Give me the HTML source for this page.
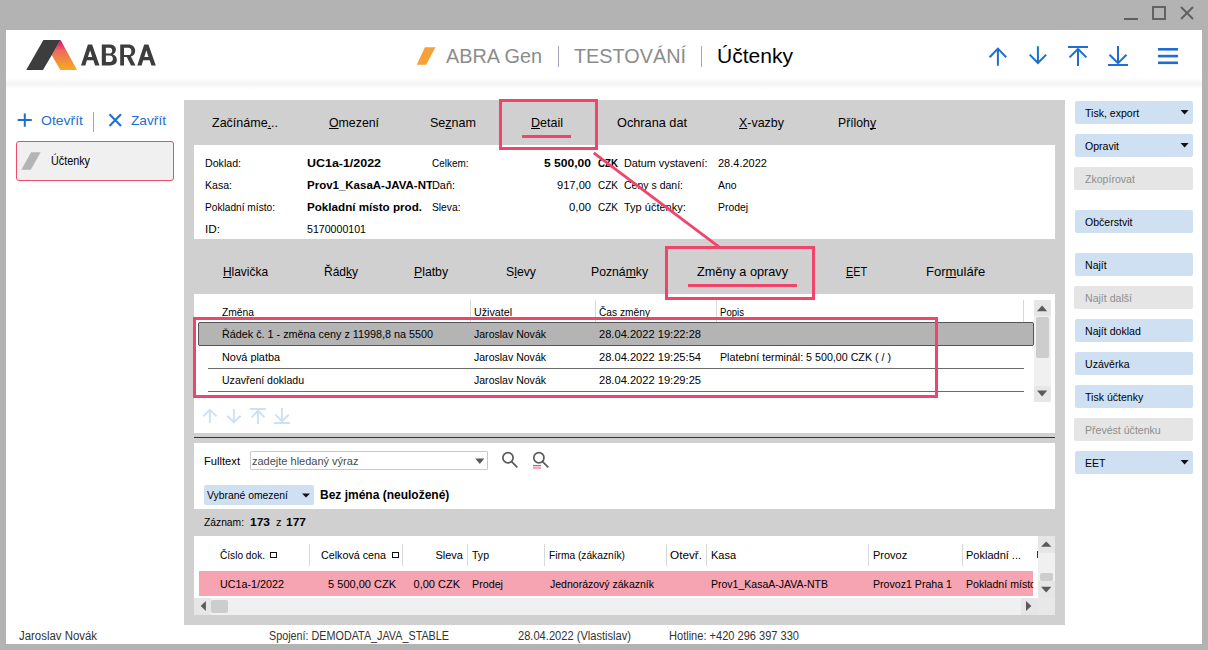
<!DOCTYPE html>
<html><head><meta charset="utf-8"><title>ABRA Gen - Účtenky</title>
<style>
html,body{margin:0;padding:0}
body{width:1208px;height:650px;overflow:hidden;position:relative;background:#b3b3b3;font-family:"Liberation Sans",sans-serif}
.a{position:absolute;display:block}
.t{position:absolute;white-space:pre;display:block}
u{text-decoration:underline;text-decoration-thickness:1px;text-underline-offset:1px;text-decoration-skip-ink:none}
</style></head><body>
<div class="a" style="left:6px;top:30px;width:1196px;height:614px;background:#fff"></div>
<div class="a" style="left:6px;top:79px;width:1196px;height:10px;background:linear-gradient(#fdfdfd,#f5f5f5 45%,#f7f7f7 60%,#fefefe)"></div>
<svg class="a" style="left:1115px;top:0" width="90" height="28" viewBox="1115 0 90 28">
<rect x="1124" y="18" width="14" height="2" fill="#5f5f5f"/>
<rect x="1153" y="7" width="12" height="12" fill="none" stroke="#5f5f5f" stroke-width="1.9"/>
<path d="M1181 7 L1193 19 M1193 7 L1181 19" stroke="#5f5f5f" stroke-width="1.9"/>
</svg>
<svg class="a" style="left:20px;top:35px" width="60" height="40" viewBox="20 35 60 40">
<defs><linearGradient id="lg" x1="0" y1="0" x2="0" y2="1"><stop offset="0" stop-color="#e5007d"/><stop offset="0.35" stop-color="#ec6a5e"/><stop offset="1" stop-color="#f6ac1e"/></linearGradient></defs>
<polygon points="60.6,40 77,70 60.3,70 51.7,55" fill="url(#lg)"/>
<polygon points="43.4,40 60.6,40 43,70 26.2,70" fill="#3d3d3d"/>
</svg>
<svg class="a" style="left:78px;top:40px" width="82" height="30" viewBox="78 40 82 30">
<g fill="#3d3d3d" fill-rule="evenodd">
<path d="M81 65.4 L87.9 44.4 L92.1 44.4 L99.5 65.4 L95.1 65.4 L93.4 60.3 L86.9 60.3 L85.3 65.4 Z M88 56.9 L92.2 56.9 L90.1 50.2 Z"/>
<path transform="translate(56.3 0)" d="M81 65.4 L87.9 44.4 L92.1 44.4 L99.5 65.4 L95.1 65.4 L93.4 60.3 L86.9 60.3 L85.3 65.4 Z M88 56.9 L92.2 56.9 L90.1 50.2 Z"/>
<path d="M101.8 44.4 H109.5 C113.5 44.4 115.9 46.5 115.9 49.6 C115.9 51.9 114.7 53.6 112.9 54.5 C115.4 55.3 116.9 57.4 116.9 60 C116.9 63.3 114.3 65.4 110.1 65.4 H101.8 Z M105.9 47.8 H109.2 C111.2 47.8 112.2 48.9 112.2 50.7 C112.2 52.5 111.2 53.6 109.2 53.6 H105.9 Z M105.9 55.6 H109.7 C111.9 55.6 112.9 56.9 112.9 58.8 C112.9 60.8 111.9 62 109.7 62 H105.9 Z"/>
<path d="M120.2 44.4 H128.4 C132.5 44.4 135.2 46.9 135.2 50.7 C135.2 53.6 133.5 55.8 130.9 56.6 L135.5 65.4 H131 L126.8 57.1 H124 V65.4 H120.2 Z M124 47.8 H128.2 C130.3 47.8 131.4 49 131.4 51.4 C131.4 53.8 130.3 55 128.2 55 H124 Z"/>
</g></svg>
<svg class="a" style="left:410px;top:40px" width="30" height="30" viewBox="410 40 30 30">
<polygon points="424.9,47.2 435.5,47.2 426.1,64.8 416.8,64.8" fill="#f7a035"/></svg>
<span class="t" style="left:446.00px;top:45px;font-size:20px;line-height:22px;color:#8c8c8c;transform:scaleX(0.9925);transform-origin:0 0;">ABRA Gen</span>
<div class="a" style="left:558px;top:46px;width:1px;height:21px;background:#a4a4bc"></div>
<span class="t" style="left:574.00px;top:45px;font-size:20px;line-height:22px;color:#8c8c8c;transform:scaleX(0.9912);transform-origin:0 0;">TESTOVÁNÍ</span>
<div class="a" style="left:701px;top:46px;width:1px;height:21px;background:#a4a4bc"></div>
<span class="t" style="left:717.00px;top:45px;font-size:20px;line-height:22px;color:#000;transform:scaleX(1.0519);transform-origin:0 0;">Účtenky</span>
<svg class="a" style="left:980px;top:38px" width="210" height="36" viewBox="980 38 210 36">
<g stroke="#1d6fce" stroke-width="2" fill="none" stroke-linecap="butt">
<path d="M989.6 57.2 L997.9 48.6 L1006.2 57.2 M997.9 49 V65.8"/>
<path d="M1029.7 54.6 L1037.9 63 L1046.2 54.6 M1037.9 46.2 V63"/>
<path d="M1068 47 H1088 M1069.5 57.4 L1078 49 L1086.4 57.4 M1078 49 V66"/>
<path d="M1109.5 54.7 L1118 63.2 L1126.5 54.7 M1118 46 V63 M1108 65 H1128"/>
</g>
<rect x="1158" y="48" width="20" height="2.6" fill="#1d6fce"/>
<rect x="1158" y="54.8" width="20" height="2.6" fill="#1d6fce"/>
<rect x="1158" y="61.5" width="20" height="2.6" fill="#1d6fce"/>
</svg>
<svg class="a" style="left:10px;top:105px" width="170" height="30" viewBox="10 105 170 30">
<g stroke="#1d6fce" stroke-width="2" fill="none">
<path d="M17.7 120 H31.8 M24.8 113.4 V126.8"/>
<path d="M109.5 114.3 L121 126 M121 114.3 L109.5 126"/>
</g></svg>
<span class="t" style="left:41.00px;top:113px;font-size:13px;line-height:15px;color:#1d6fce;transform:scaleX(1.0768);transform-origin:0 0;">Otevřít</span>
<div class="a" style="left:93px;top:112px;width:1px;height:20px;background:#a4a4bc"></div>
<span class="t" style="left:131.00px;top:113px;font-size:13px;line-height:15px;color:#1d6fce;transform:scaleX(1.0535);transform-origin:0 0;">Zavřít</span>
<div class="a" style="left:16px;top:141px;width:158px;height:40px;background:#f0f0f0;border:1px solid #ee4a6c;border-radius:3px;box-sizing:border-box"></div>
<svg class="a" style="left:16px;top:141px" width="40" height="40" viewBox="16 141 40 40">
<polygon points="31.1,152.2 40.7,152.2 30.8,169.8 21.3,169.8" fill="#b4b4b4"/></svg>
<span class="t" style="left:51.00px;top:154px;font-size:12px;line-height:14px;color:#000;transform:scaleX(0.8997);transform-origin:0 0;">Účtenky</span>
<div class="a" style="left:184px;top:100px;width:881px;height:525px;background:#d0d0d0"></div>
<span class="t" style="left:212.00px;top:115px;font-size:13px;line-height:15px;color:#000;transform:scaleX(0.9616);transform-origin:0 0;">Začínáme<u>.</u>..</span>
<span class="t" style="left:329.00px;top:115px;font-size:13px;line-height:15px;color:#000;transform:scaleX(0.9480);transform-origin:0 0;"><u>O</u>mezení</span>
<span class="t" style="left:430.00px;top:115px;font-size:13px;line-height:15px;color:#000;transform:scaleX(0.9645);transform-origin:0 0;">Se<u>z</u>nam</span>
<span class="t" style="left:531.00px;top:115px;font-size:13px;line-height:15px;color:#000;transform:scaleX(0.9628);transform-origin:0 0;"><u>D</u>etail</span>
<span class="t" style="left:617.00px;top:115px;font-size:13px;line-height:15px;color:#000;transform:scaleX(0.9784);transform-origin:0 0;">Ochrana dat</span>
<span class="t" style="left:739.00px;top:115px;font-size:13px;line-height:15px;color:#000;transform:scaleX(0.9582);transform-origin:0 0;"><u>X</u>-vazby</span>
<span class="t" style="left:838.00px;top:115px;font-size:13px;line-height:15px;color:#000;transform:scaleX(0.9392);transform-origin:0 0;">Příloh<u>y</u></span>
<div class="a" style="left:194px;top:145px;width:861px;height:94px;background:#fff"></div>
<span class="t" style="left:205.00px;top:157px;font-size:11px;line-height:12px;color:#000;transform:scaleX(0.9652);transform-origin:0 0;">Doklad:</span>
<span class="t" style="left:307.00px;top:157px;font-size:11px;line-height:12px;color:#000;font-weight:bold;transform:scaleX(1.1309);transform-origin:0 0;">UC1a-1/2022</span>
<span class="t" style="left:432.00px;top:157px;font-size:11px;line-height:12px;color:#000;transform:scaleX(0.9047);transform-origin:0 0;">Celkem:</span>
<span class="t" style="left:544.00px;top:157px;font-size:11px;line-height:12px;color:#000;font-weight:bold;transform:scaleX(1.0976);transform-origin:0 0;">5 500,00</span>
<span class="t" style="left:598.00px;top:157px;font-size:11px;line-height:12px;color:#000;font-weight:bold;transform:scaleX(0.8847);transform-origin:0 0;">CZK</span>
<span class="t" style="left:624.00px;top:157px;font-size:11px;line-height:12px;color:#000;transform:scaleX(0.9826);transform-origin:0 0;">Datum vystavení:</span>
<span class="t" style="left:718.00px;top:157px;font-size:11px;line-height:12px;color:#000;">28.4.2022</span>
<span class="t" style="left:205.00px;top:179px;font-size:11px;line-height:12px;color:#000;transform:scaleX(0.9599);transform-origin:0 0;">Kasa:</span>
<span class="t" style="left:307.00px;top:179px;font-size:11px;line-height:12px;color:#000;font-weight:bold;transform:scaleX(1.0445);transform-origin:0 0;width:119.68px;overflow:hidden;white-space:nowrap;">Prov1_KasaA-JAVA-NTB</span>
<span class="t" style="left:432.00px;top:179px;font-size:11px;line-height:12px;color:#000;transform:scaleX(0.9899);transform-origin:0 0;">Daň:</span>
<span class="t" style="left:557.00px;top:179px;font-size:11px;line-height:12px;color:#000;transform:scaleX(1.0105);transform-origin:0 0;">917,00</span>
<span class="t" style="left:598.00px;top:179px;font-size:11px;line-height:12px;color:#000;transform:scaleX(0.9091);transform-origin:0 0;">CZK</span>
<span class="t" style="left:624.00px;top:179px;font-size:11px;line-height:12px;color:#000;transform:scaleX(0.9554);transform-origin:0 0;">Ceny s daní:</span>
<span class="t" style="left:718.00px;top:179px;font-size:11px;line-height:12px;color:#000;transform:scaleX(0.9452);transform-origin:0 0;">Ano</span>
<span class="t" style="left:205.00px;top:201px;font-size:11px;line-height:12px;color:#000;transform:scaleX(0.9233);transform-origin:0 0;">Pokladní místo:</span>
<span class="t" style="left:307.00px;top:201px;font-size:11px;line-height:12px;color:#000;font-weight:bold;transform:scaleX(1.0571);transform-origin:0 0;">Pokladní místo prod.</span>
<span class="t" style="left:432.00px;top:201px;font-size:11px;line-height:12px;color:#000;transform:scaleX(0.9322);transform-origin:0 0;">Sleva:</span>
<span class="t" style="left:569.00px;top:201px;font-size:11px;line-height:12px;color:#000;transform:scaleX(1.0276);transform-origin:0 0;">0,00</span>
<span class="t" style="left:598.00px;top:201px;font-size:11px;line-height:12px;color:#000;transform:scaleX(0.9091);transform-origin:0 0;">CZK</span>
<span class="t" style="left:624.00px;top:201px;font-size:11px;line-height:12px;color:#000;">Typ účtenky:</span>
<span class="t" style="left:718.00px;top:201px;font-size:11px;line-height:12px;color:#000;transform:scaleX(0.9434);transform-origin:0 0;">Prodej</span>
<span class="t" style="left:205.00px;top:223px;font-size:11px;line-height:12px;color:#000;transform:scaleX(1.0672);transform-origin:0 0;">ID:</span>
<span class="t" style="left:307.00px;top:223px;font-size:11px;line-height:12px;color:#000;transform:scaleX(0.9644);transform-origin:0 0;">5170000101</span>
<span class="t" style="left:223.00px;top:264px;font-size:13px;line-height:15px;color:#000;transform:scaleX(0.9160);transform-origin:0 0;"><u>H</u>lavička</span>
<span class="t" style="left:324.00px;top:264px;font-size:13px;line-height:15px;color:#000;transform:scaleX(0.9227);transform-origin:0 0;">Řád<u>k</u>y</span>
<span class="t" style="left:414.00px;top:264px;font-size:13px;line-height:15px;color:#000;transform:scaleX(0.9410);transform-origin:0 0;"><u>P</u>latby</span>
<span class="t" style="left:506.00px;top:264px;font-size:13px;line-height:15px;color:#000;transform:scaleX(0.9437);transform-origin:0 0;">S<u>l</u>evy</span>
<span class="t" style="left:591.00px;top:264px;font-size:13px;line-height:15px;color:#000;transform:scaleX(0.9392);transform-origin:0 0;">Pozná<u>m</u>ky</span>
<span class="t" style="left:697.00px;top:264px;font-size:13px;line-height:15px;color:#000;transform:scaleX(0.9763);transform-origin:0 0;">Změny a opravy</span>
<span class="t" style="left:846.00px;top:264px;font-size:13px;line-height:15px;color:#000;transform:scaleX(0.8306);transform-origin:0 0;"><u>E</u>ET</span>
<span class="t" style="left:926.00px;top:264px;font-size:13px;line-height:15px;color:#000;">For<u>m</u>uláře</span>
<div class="a" style="left:194px;top:294px;width:861px;height:139px;background:#fff"></div>
<div class="a" style="left:470px;top:300px;width:1px;height:22px;background:#d8d8d8"></div>
<div class="a" style="left:595px;top:300px;width:1px;height:22px;background:#d8d8d8"></div>
<div class="a" style="left:716px;top:300px;width:1px;height:22px;background:#d8d8d8"></div>
<div class="a" style="left:1023px;top:300px;width:1px;height:22px;background:#d8d8d8"></div>
<span class="t" style="left:222.00px;top:306px;font-size:11px;line-height:12px;color:#000;transform:scaleX(0.9347);transform-origin:0 0;">Změna</span>
<span class="t" style="left:474.00px;top:306px;font-size:11px;line-height:12px;color:#000;transform:scaleX(0.9713);transform-origin:0 0;">Uživatel</span>
<span class="t" style="left:599.00px;top:306px;font-size:11px;line-height:12px;color:#000;transform:scaleX(0.9270);transform-origin:0 0;">Čas změny</span>
<span class="t" style="left:720.00px;top:306px;font-size:11px;line-height:12px;color:#000;transform:scaleX(0.8722);transform-origin:0 0;">Popis</span>
<div class="a" style="left:198px;top:322px;width:836px;height:24px;background:#b4b4b4;border:1px solid #555;border-radius:2px;box-sizing:border-box"></div>
<span class="t" style="left:222.00px;top:328px;font-size:11px;line-height:12px;color:#000;transform:scaleX(0.9812);transform-origin:0 0;">Řádek č. 1 - změna ceny z 11998,8 na 5500</span>
<span class="t" style="left:474.00px;top:328px;font-size:11px;line-height:12px;color:#000;transform:scaleX(0.9575);transform-origin:0 0;">Jaroslav Novák</span>
<span class="t" style="left:599.00px;top:328px;font-size:11px;line-height:12px;color:#000;transform:scaleX(1.0106);transform-origin:0 0;">28.04.2022 19:22:28</span>
<span class="t" style="left:222.00px;top:351px;font-size:11px;line-height:12px;color:#000;transform:scaleX(0.9880);transform-origin:0 0;">Nová platba</span>
<span class="t" style="left:474.00px;top:351px;font-size:11px;line-height:12px;color:#000;transform:scaleX(0.9575);transform-origin:0 0;">Jaroslav Novák</span>
<span class="t" style="left:599.00px;top:351px;font-size:11px;line-height:12px;color:#000;transform:scaleX(1.0106);transform-origin:0 0;">28.04.2022 19:25:54</span>
<span class="t" style="left:720.00px;top:351px;font-size:11px;line-height:12px;color:#000;transform:scaleX(0.9711);transform-origin:0 0;">Platební terminál: 5 500,00 CZK ( / )</span>
<span class="t" style="left:222.00px;top:374px;font-size:11px;line-height:12px;color:#000;transform:scaleX(0.9579);transform-origin:0 0;">Uzavření dokladu</span>
<span class="t" style="left:474.00px;top:374px;font-size:11px;line-height:12px;color:#000;transform:scaleX(0.9575);transform-origin:0 0;">Jaroslav Novák</span>
<span class="t" style="left:599.00px;top:374px;font-size:11px;line-height:12px;color:#000;transform:scaleX(1.0106);transform-origin:0 0;">28.04.2022 19:29:25</span>
<div class="a" style="left:208px;top:368px;width:816px;height:1px;background:#6a6a6a"></div>
<div class="a" style="left:208px;top:391px;width:816px;height:1px;background:#6a6a6a"></div>
<div class="a" style="left:1034px;top:300px;width:17px;height:102px;background:#f0f0f0"></div>
<div class="a" style="left:1034px;top:300px;width:17px;height:16px;background:#e6e6e6;border-radius:2px"></div>
<div class="a" style="left:1034px;top:386px;width:17px;height:16px;background:#e6e6e6;border-radius:2px"></div>
<div class="a" style="left:1036px;top:317px;width:13px;height:41px;background:#cdcdcd;border-radius:2px"></div>
<svg class="a" style="left:1034px;top:300px" width="17" height="102" viewBox="1034 300 17 102">
<polygon points="1037,311.3 1047.2,311.3 1042.1,305.6" fill="#5a5a5a"/>
<polygon points="1037,390.6 1047.2,390.6 1042.1,396.4" fill="#5a5a5a"/></svg>
<div class="a" style="left:193px;top:317px;width:745px;height:81px;border:3px solid #f0446a;box-sizing:border-box"></div>
<svg class="a" style="left:195px;top:400px" width="100" height="30" viewBox="195 400 100 30">
<g stroke="#cde0f4" stroke-width="1.9" fill="none">
<path d="M203.4 416.4 L209.9 409.8 L216.6 416.4 M209.9 410 V423"/>
<path d="M227.2 415.7 L233.9 422.3 L240.6 415.7 M233.9 409.2 V422"/>
<path d="M250 409 H266 M251.6 417.3 L258 410.5 L264.5 417.3 M258 410.5 V424"/>
<path d="M275.4 414.7 L281.9 421.3 L288.8 414.7 M281.9 408 V421.5 M274 423 H290"/>
</g></svg>
<div class="a" style="left:194px;top:437px;width:861px;height:1px;background:#333"></div>
<div class="a" style="left:194px;top:443px;width:861px;height:66px;background:#fff"></div>
<span class="t" style="left:204.00px;top:455px;font-size:11px;line-height:12px;color:#000;transform:scaleX(1.0154);transform-origin:0 0;">Fulltext</span>
<div class="a" style="left:250px;top:451px;width:238px;height:19px;background:#fff;border:1px solid #c9c9c9;border-radius:1px;box-sizing:border-box"></div>
<span class="t" style="left:252.00px;top:455px;font-size:11px;line-height:12px;color:#4a4a4a;">zadejte hledaný výraz</span>
<svg class="a" style="left:470px;top:450px" width="90" height="22" viewBox="470 450 90 22">
<polygon points="475.3,458.5 484.3,458.5 479.8,464" fill="#5a5a5a"/>
<g stroke="#5a5a5a" stroke-width="1.7" fill="none"><circle cx="508" cy="457.8" r="5.1"/><path d="M511.6 461.6 L517.3 467.3"/>
<circle cx="538.9" cy="457.8" r="5.1"/><path d="M542.5 461.6 L548.3 467.3"/></g>
<path d="M533 465.6 H541 M533 468 H541" stroke="#ea4b6e" stroke-width="1.2"/>
</svg>
<div class="a" style="left:204px;top:485px;width:110px;height:20px;background:#cfe0f3;border-radius:2px"></div>
<span class="t" style="left:207.00px;top:489px;font-size:11px;line-height:12px;color:#000;transform:scaleX(0.9439);transform-origin:0 0;">Vybrané omezení</span>
<svg class="a" style="left:300px;top:490px" width="12" height="10" viewBox="300 490 12 10">
<polygon points="302,493.5 310,493.5 306,497.5" fill="#111"/></svg>
<span class="t" style="left:320.00px;top:488px;font-size:12px;line-height:14px;color:#000;font-weight:bold;">Bez jména (neuložené)</span>
<span class="t" style="left:204.00px;top:516px;font-size:11px;line-height:12px;color:#000;transform:scaleX(0.9347);transform-origin:0 0;">Záznam:</span>
<span class="t" style="left:250.00px;top:516px;font-size:11px;line-height:12px;color:#000;font-weight:bold;transform:scaleX(1.0897);transform-origin:0 0;">173</span>
<span class="t" style="left:276.00px;top:516px;font-size:11px;line-height:12px;color:#000;">z</span>
<span class="t" style="left:286.00px;top:516px;font-size:11px;line-height:12px;color:#000;font-weight:bold;transform:scaleX(1.0897);transform-origin:0 0;">177</span>
<div class="a" style="left:194px;top:536px;width:861px;height:79px;background:#fff"></div>
<div class="a" style="left:309px;top:544px;width:1px;height:22px;background:#d8d8d8"></div>
<div class="a" style="left:402px;top:544px;width:1px;height:22px;background:#d8d8d8"></div>
<div class="a" style="left:467px;top:544px;width:1px;height:22px;background:#d8d8d8"></div>
<div class="a" style="left:544px;top:544px;width:1px;height:22px;background:#d8d8d8"></div>
<div class="a" style="left:666px;top:544px;width:1px;height:22px;background:#d8d8d8"></div>
<div class="a" style="left:706px;top:544px;width:1px;height:22px;background:#d8d8d8"></div>
<div class="a" style="left:868px;top:544px;width:1px;height:22px;background:#d8d8d8"></div>
<div class="a" style="left:962px;top:544px;width:1px;height:22px;background:#d8d8d8"></div>
<span class="t" style="left:220.00px;top:549px;font-size:11px;line-height:12px;color:#000;transform:scaleX(0.9201);transform-origin:0 0;">Číslo dok.</span>
<div class="a" style="left:270px;top:552px;width:7px;height:6px;border:1px solid #111;box-sizing:border-box"></div>
<span class="t" style="left:321.00px;top:549px;font-size:11px;line-height:12px;color:#000;transform:scaleX(0.9752);transform-origin:0 0;">Celková cena</span>
<div class="a" style="left:392px;top:552px;width:7px;height:6px;border:1px solid #111;box-sizing:border-box"></div>
<span class="t" style="left:435.48px;top:549px;font-size:11px;line-height:12px;color:#000;">Sleva</span>
<span class="t" style="left:472.00px;top:549px;font-size:11px;line-height:12px;color:#000;transform:scaleX(0.9588);transform-origin:0 0;">Typ</span>
<span class="t" style="left:549.00px;top:549px;font-size:11px;line-height:12px;color:#000;transform:scaleX(0.9279);transform-origin:0 0;">Firma (zákazník)</span>
<span class="t" style="left:670.00px;top:549px;font-size:11px;line-height:12px;color:#000;transform:scaleX(1.0685);transform-origin:0 0;">Otevř.</span>
<span class="t" style="left:711.00px;top:549px;font-size:11px;line-height:12px;color:#000;">Kasa</span>
<span class="t" style="left:873.00px;top:549px;font-size:11px;line-height:12px;color:#000;">Provoz</span>
<span class="t" style="left:966.00px;top:549px;font-size:11px;line-height:12px;color:#000;">Pokladní ...</span>
<div class="a" style="left:1037px;top:551px;width:1px;height:7px;background:#333"></div>
<div class="a" style="left:199px;top:571px;width:834px;height:25px;background:#f6a3b2"></div>
<span class="t" style="left:220.00px;top:578px;font-size:11px;line-height:12px;color:#000;transform:scaleX(0.9781);transform-origin:0 0;">UC1a-1/2022</span>
<span class="t" style="left:328.12px;top:578px;font-size:11px;line-height:12px;color:#000;">5 500,00 CZK</span>
<span class="t" style="left:413.53px;top:578px;font-size:11px;line-height:12px;color:#000;">0,00 CZK</span>
<span class="t" style="left:472.00px;top:578px;font-size:11px;line-height:12px;color:#000;transform:scaleX(0.9749);transform-origin:0 0;">Prodej</span>
<span class="t" style="left:550.00px;top:578px;font-size:11px;line-height:12px;color:#000;transform:scaleX(0.9556);transform-origin:0 0;">Jednorázový zákazník</span>
<span class="t" style="left:711.00px;top:578px;font-size:11px;line-height:12px;color:#000;transform:scaleX(0.9553);transform-origin:0 0;">Prov1_KasaA-JAVA-NTB</span>
<span class="t" style="left:873.00px;top:578px;font-size:11px;line-height:12px;color:#000;transform:scaleX(0.9641);transform-origin:0 0;">Provoz1 Praha 1</span>
<span class="t" style="left:966.00px;top:578px;font-size:11px;line-height:12px;color:#000;transform:scaleX(0.9621);transform-origin:0 0;width:69.64px;overflow:hidden;white-space:nowrap;">Pokladní místo</span>
<div class="a" style="left:1038px;top:536px;width:17px;height:62px;background:#f0f0f0"></div>
<div class="a" style="left:1038px;top:536px;width:17px;height:17px;background:#e6e6e6"></div>
<div class="a" style="left:1038px;top:581px;width:17px;height:17px;background:#e6e6e6"></div>
<div class="a" style="left:1040px;top:573px;width:13px;height:8px;background:#cdcdcd;border-radius:2px"></div>
<div class="a" style="left:194px;top:598px;width:861px;height:17px;background:#f0f0f0"></div>
<div class="a" style="left:194px;top:598px;width:17px;height:17px;background:#e6e6e6;border-radius:1px"></div>
<div class="a" style="left:211px;top:600px;width:17px;height:13px;background:#cdcdcd;border-radius:2px"></div>
<div class="a" style="left:1021px;top:598px;width:17px;height:17px;background:#e6e6e6"></div>
<div class="a" style="left:1038px;top:598px;width:17px;height:17px;background:#e8e8e8"></div>
<svg class="a" style="left:195px;top:536px" width="860" height="80" viewBox="195 536 860 80">
<polygon points="1041,546.8 1051.4,546.8 1046.2,541.4" fill="#5a5a5a"/>
<polygon points="1041,586.8 1051.4,586.8 1046.2,592.6" fill="#5a5a5a"/>
<polygon points="205.9,601 205.9,611 200.7,606" fill="#5a5a5a"/>
<polygon points="1026,601 1026,611 1031.4,606" fill="#5a5a5a"/>
</svg>
<div class="a" style="left:499px;top:99px;width:99px;height:51px;border:3px solid #f0446a;box-sizing:border-box"></div>
<div class="a" style="left:522px;top:135px;width:49px;height:3px;background:#f0446a"></div>
<div class="a" style="left:665px;top:246px;width:150px;height:54px;border:3px solid #f0446a;box-sizing:border-box"></div>
<div class="a" style="left:688px;top:284px;width:109px;height:3px;background:#f0446a"></div>
<svg class="a" style="left:590px;top:145px" width="135" height="105" viewBox="590 145 135 105">
<path d="M593.7 152.9 L719.3 247.1" stroke="#f0446a" stroke-width="2.8"/></svg>
<div class="a" style="left:1075px;top:101px;width:118px;height:23px;background:#cfe0f3;border-radius:2px"></div>
<span class="t" style="left:1085.00px;top:107px;font-size:11px;line-height:12px;color:#000;transform:scaleX(0.9600);transform-origin:0 0;">Tisk, export</span>
<svg class="a" style="left:1178px;top:107px" width="12" height="10" viewBox="1178 107 12 10">
<polygon points="1180.6,110 1188.6,110 1184.6,114.4" fill="#111"/></svg>
<div class="a" style="left:1075px;top:134px;width:118px;height:23px;background:#cfe0f3;border-radius:2px"></div>
<span class="t" style="left:1085.00px;top:140px;font-size:11px;line-height:12px;color:#000;transform:scaleX(0.9600);transform-origin:0 0;">Opravit</span>
<svg class="a" style="left:1178px;top:140px" width="12" height="10" viewBox="1178 140 12 10">
<polygon points="1180.6,143 1188.6,143 1184.6,147.4" fill="#111"/></svg>
<div class="a" style="left:1074px;top:167px;width:119px;height:23px;background:#e5e5e5;border-radius:2px"></div>
<span class="t" style="left:1085.00px;top:173px;font-size:11px;line-height:12px;color:#8e8e8e;transform:scaleX(0.9600);transform-origin:0 0;">Zkopírovat</span>
<div class="a" style="left:1075px;top:210px;width:118px;height:23px;background:#cfe0f3;border-radius:2px"></div>
<span class="t" style="left:1085.00px;top:216px;font-size:11px;line-height:12px;color:#000;transform:scaleX(0.9600);transform-origin:0 0;">Občerstvit</span>
<div class="a" style="left:1075px;top:253px;width:118px;height:23px;background:#cfe0f3;border-radius:2px"></div>
<span class="t" style="left:1085.00px;top:259px;font-size:11px;line-height:12px;color:#000;transform:scaleX(0.9600);transform-origin:0 0;">Najít</span>
<div class="a" style="left:1074px;top:286px;width:119px;height:23px;background:#e5e5e5;border-radius:2px"></div>
<span class="t" style="left:1085.00px;top:292px;font-size:11px;line-height:12px;color:#8e8e8e;transform:scaleX(0.9600);transform-origin:0 0;">Najít další</span>
<div class="a" style="left:1075px;top:319px;width:118px;height:23px;background:#cfe0f3;border-radius:2px"></div>
<span class="t" style="left:1085.00px;top:325px;font-size:11px;line-height:12px;color:#000;transform:scaleX(0.9600);transform-origin:0 0;">Najít doklad</span>
<div class="a" style="left:1075px;top:352px;width:118px;height:23px;background:#cfe0f3;border-radius:2px"></div>
<span class="t" style="left:1085.00px;top:358px;font-size:11px;line-height:12px;color:#000;transform:scaleX(0.9600);transform-origin:0 0;">Uzávěrka</span>
<div class="a" style="left:1075px;top:385px;width:118px;height:23px;background:#cfe0f3;border-radius:2px"></div>
<span class="t" style="left:1085.00px;top:391px;font-size:11px;line-height:12px;color:#000;transform:scaleX(0.9600);transform-origin:0 0;">Tisk účtenky</span>
<div class="a" style="left:1074px;top:418px;width:119px;height:23px;background:#e5e5e5;border-radius:2px"></div>
<span class="t" style="left:1085.00px;top:424px;font-size:11px;line-height:12px;color:#8e8e8e;transform:scaleX(0.9600);transform-origin:0 0;">Převést účtenku</span>
<div class="a" style="left:1075px;top:451px;width:118px;height:23px;background:#cfe0f3;border-radius:2px"></div>
<span class="t" style="left:1085.00px;top:457px;font-size:11px;line-height:12px;color:#000;transform:scaleX(0.9600);transform-origin:0 0;">EET</span>
<svg class="a" style="left:1178px;top:457px" width="12" height="10" viewBox="1178 457 12 10">
<polygon points="1180.6,460 1188.6,460 1184.6,464.4" fill="#111"/></svg>
<span class="t" style="left:19.00px;top:629px;font-size:12px;line-height:14px;color:#333;transform:scaleX(0.9508);transform-origin:0 0;">Jaroslav Novák</span>
<span class="t" style="left:269.00px;top:629px;font-size:12px;line-height:14px;color:#333;transform:scaleX(0.8986);transform-origin:0 0;">Spojení: DEMODATA_JAVA_STABLE</span>
<span class="t" style="left:518.00px;top:629px;font-size:12px;line-height:14px;color:#333;transform:scaleX(0.9257);transform-origin:0 0;">28.04.2022 (Vlastislav)</span>
<span class="t" style="left:669.00px;top:629px;font-size:12px;line-height:14px;color:#333;transform:scaleX(0.9212);transform-origin:0 0;">Hotline: +420 296 397 330</span>
</body></html>
